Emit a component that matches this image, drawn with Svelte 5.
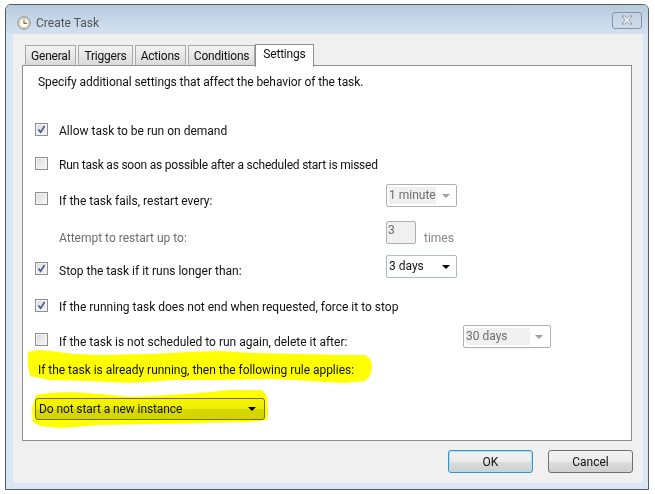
<script>
	const tabs = ['General', 'Triggers', 'Actions', 'Conditions'];
</script>

<div class="page">
	<div class="dialog">
		<header class="titlebar">
			<svg class="clock" viewBox="0 0 14 14" width="14" height="14">
				<circle cx="7" cy="7" r="6.2" fill="#e6e2d2" stroke="#8a8a80" />
				<circle cx="7" cy="7" r="4.6" fill="#fbf8e8" stroke="#c4bfa6" stroke-width="0.6" />
				<path d="M7 3.4V7.4H10" fill="none" stroke="#77725c" stroke-width="1.1" />
			</svg>
			<span class="title">Create Task</span>
			<button class="close" aria-label="Close">
				<svg viewBox="0 0 14 10" width="14" height="10">
					<path d="M2 1h2.6L7 3.4 9.4 1H12L8.8 5 12 9H9.4L7 6.6 4.6 9H2L5.2 5Z" fill="#f6f6f6" stroke="#7a8592" stroke-width="0.8" stroke-linejoin="round" />
				</svg>
			</button>
		</header>

		<div class="client">
			<nav class="tabs">
				{#each tabs as tab}
					<span class="tab">{tab}</span>
				{/each}
				<span class="tab active">Settings</span>
			</nav>

			<section class="panel">
				<p class="intro">Specify additional settings that affect the behavior of the task.</p>

				<div class="row allow">
					<span class="check checked"><svg viewBox="0 0 9 9" width="9" height="9"><path d="M1.5 4.5 3.6 7.2 7.6 1" fill="none" stroke="#4a5f97" stroke-width="1.7" /></svg></span>
					<label>Allow task to be run on demand</label>
				</div>
				<div class="row run">
					<span class="check"></span>
					<label class="tight">Run task as soon as possible after a scheduled start is missed</label>
				</div>
				<div class="row fails">
					<span class="check low"></span>
					<label class="wide low">If the task fails, restart every:</label>
					<span class="select disabled"><span class="value">1 minute</span><i class="arrow"></i></span>
				</div>
				<div class="row attempt">
					<label class="wide indent low muted">Attempt to restart up to:</label>
					<span class="spin">3</span>
					<span class="times">times</span>
				</div>
				<div class="row stop">
					<span class="check checked low-sm"><svg viewBox="0 0 9 9" width="9" height="9"><path d="M1.5 4.5 3.6 7.2 7.6 1" fill="none" stroke="#4a5f97" stroke-width="1.7" /></svg></span>
					<label class="wide low-sm">Stop the task if it runs longer than:</label>
					<span class="select"><span class="value">3 days</span><i class="arrow"></i></span>
				</div>
				<div class="row force">
					<span class="check checked"><svg viewBox="0 0 9 9" width="9" height="9"><path d="M1.5 4.5 3.6 7.2 7.6 1" fill="none" stroke="#4a5f97" stroke-width="1.7" /></svg></span>
					<label>If the running task does not end when requested, force it to stop</label>
				</div>
				<div class="row remove">
					<span class="check low"></span>
					<label class="wider low">If the task is not scheduled to run again, delete it after:</label>
					<span class="select disabled long"><span class="value">30 days</span><i class="arrow"></i></span>
				</div>

				<p class="already">If the task is already running, then the following rule applies:</p>

				<div class="combo">
					<span>Do not start a new instance</span>
					<i class="arrow"></i>
				</div>
			</section>

			<footer class="actions">
				<button class="btn default">OK</button>
				<button class="btn">Cancel</button>
			</footer>
		</div>

		<!-- yellow marker strokes drawn by hand over the screenshot -->
		<svg class="marker" viewBox="0 0 655 494" width="655" height="494">
			<path d="M28 352 38 350 50 351 75 354 100 355 150 354 190 352 220 351 250 353 300 354 345 355 365 355 371 360 372 368 370 376 365 381 345 383 325 382 295 380 270 379 220 380 175 380 130 383 90 381 50 380 30 376 28 365Z" fill="#ff0" />
			<path d="M36 395 50 393 70 392 100 394 130 397 170 395 200 393 230 390 262 390 267 396 268 412 267 420 250 422 200 423 150 424 100 425 60 428 40 426 33 422 32 408Z" fill="#ff0" />
		</svg>
	</div>
</div>

<style>
	:global(body) {
		margin: 0;
		background: #fff;
	}

	.page {
		width: 655px;
		height: 494px;
		padding: 4px 6px 4px 5px;
		box-sizing: border-box;
		font-family: Roboto, 'Open Sans', sans-serif;
		font-size: 12px;
		color: #111;
	}

	.dialog {
		position: relative;
		height: 486px;
		box-sizing: border-box;
		border: 1px solid #5a5a5a;
		border-radius: 6px 6px 0 0;
		background: #d9e6f3;
		display: flex;
		flex-direction: column;
		padding: 0 5px 6px 7px;
	}

	.titlebar {
		height: 29px;
		margin: 0 -5px 0 -7px;
		padding: 0 6px 0 11px;
		display: flex;
		align-items: center;
		flex-shrink: 0;
		border-radius: 5px 5px 0 0;
		background: linear-gradient(#b7cbdf, #d3e2f1);
	}

	.clock {
		margin-right: 5px;
		margin-top: 6px;
	}

	.title {
		font-size: 12px;
		color: #555;
		margin-top: 7px;
	}

	.close {
		margin-left: auto;
		margin-top: 1px;
		width: 30px;
		height: 17px;
		padding: 0;
		box-sizing: border-box;
		border: 1px solid #8394ab;
		border-radius: 3px;
		background: linear-gradient(#c4d3e3, #cfdcea);
		display: flex;
		align-items: center;
		justify-content: center;
	}

	.client {
		flex: 1;
		background: #f0f0f0;
		padding: 10px 11px 0 9px;
		display: flex;
		flex-direction: column;
	}

	.tabs {
		display: flex;
		align-items: flex-end;
		padding-left: 3px;
		gap: 2px;
		height: 22px;
		position: relative;
		z-index: 1;
		margin-bottom: -1px;
		letter-spacing: -0.2px;
	}

	.tab {
		height: 21px;
		box-sizing: border-box;
		padding: 3px 5px 0;
		border: 1px solid #a8a8a8;
		border-bottom-color: #8e8f8f;
		background: linear-gradient(#f3f3f3, #dadada);
		color: #111;
	}

	.tab.active {
		height: 23px;
		margin: 0 0 -1px -2px;
		padding: 2px 7px 0;
		background: #fff;
		border-color: #8e8f8f;
		border-bottom: none;
	}

	.panel {
		height: 376px;
		box-sizing: border-box;
		border: 1px solid #8e8f8f;
		background: #fff;
		padding: 7px 0 0 12px;
		display: flex;
		flex-direction: column;
	}

	p {
		margin: 0;
		height: 16px;
		line-height: 16px;
		white-space: nowrap;
	}

	.intro {
		margin-left: 3px;
		line-height: 18px;
		letter-spacing: -0.08px;
	}

	.row {
		display: flex;
		align-items: flex-start;
		white-space: nowrap;
	}

	label {
		height: 16px;
		line-height: 18px;
	}

	.tight {
		letter-spacing: -0.22px;
	}

	.allow { margin-top: 33px; }
	.run { margin-top: 18px; }
	.fails { margin-top: 12px; }
	.attempt { margin-top: 13px; }
	.stop { margin-top: 9px; }
	.force { margin-top: 20px; }
	.remove { margin-top: 11px; }
	.already { margin: 13px 0 0 3px; letter-spacing: -0.03px; }

	.check {
		width: 13px;
		height: 13px;
		box-sizing: border-box;
		margin: 1px 11px 2px 0;
		border: 1px solid #8e8f8f;
		outline: 1px solid #f4f4f4;
		outline-offset: -2px;
		background: linear-gradient(135deg, #dcdcdc, #f6f6f6);
		display: flex;
		align-items: center;
		justify-content: center;
		flex-shrink: 0;
	}

	.check svg {
		display: block;
	}

	.low { margin-top: 8px; }
	.low-sm { margin-top: 7px; }

	.wide {
		width: 327px;
	}

	.wider {
		width: 404px;
	}

	.indent {
		margin-left: 24px;
	}

	.muted {
		color: #6d6d6d;
	}

	.select {
		width: 71px;
		height: 23px;
		box-sizing: border-box;
		border: 1px solid #a9bacb;
		border-radius: 2px;
		background: #fff;
		display: flex;
		align-items: center;
		padding: 0 4px 0 2px;
		justify-content: space-between;
	}

	.select.disabled {
		border-color: #b0b0b0;
		color: #6d6d6d;
	}

	.select.disabled .value {
		background: #f0f0f0;
	}

	.select.disabled .arrow {
		border-top-color: #a0a0a0;
	}

	.select.long {
		width: 88px;
		padding-right: 5px;
	}

	.select.long .value {
		width: 64px;
	}

	.value {
		height: 17px;
		line-height: 17px;
	}

	.arrow {
		width: 0;
		height: 0;
		margin-right: 2px;
		border: 4px solid transparent;
		border-top: 4px solid #000;
		border-bottom: 0;
	}

	.spin {
		width: 30px;
		height: 23px;
		line-height: 16px;
		box-sizing: border-box;
		border: 1px solid #b0b0b0;
		border-radius: 2px;
		background: #f0f0f0;
		color: #6d6d6d;
		padding-left: 1px;
	}

	.times {
		margin: 9px 0 0 8px;
		line-height: 16px;
		color: #888;
	}

	.combo {
		width: 230px;
		height: 22px;
		box-sizing: border-box;
		margin-top: 20px;
		padding: 0 6px 0 3px;
		border: 1px solid #707070;
		border-radius: 3px;
		background: linear-gradient(#f5f5f5 0, #ededed 50%, #d8d8d8 50%, #d4d4d4 100%);
		display: flex;
		align-items: center;
		justify-content: space-between;
		letter-spacing: -0.1px;
	}

	.actions {
		display: flex;
		justify-content: flex-end;
		gap: 15px;
		margin-top: 9px;
		margin-right: -1px;
	}

	.btn {
		width: 85px;
		height: 23px;
		box-sizing: border-box;
		padding: 0;
		font: inherit;
		color: #111;
		border: 1px solid #707070;
		border-radius: 3px;
		background: linear-gradient(#f2f2f2 0, #ebebeb 50%, #dddddd 50%, #cfcfcf 100%);
	}

	.btn.default {
		border-color: #3c8fc1;
		box-shadow: inset 0 0 0 1px #a6e3f4;
	}

	.marker {
		position: absolute;
		left: -6px;
		top: -5px;
		mix-blend-mode: multiply;
		pointer-events: none;
	}
</style>
